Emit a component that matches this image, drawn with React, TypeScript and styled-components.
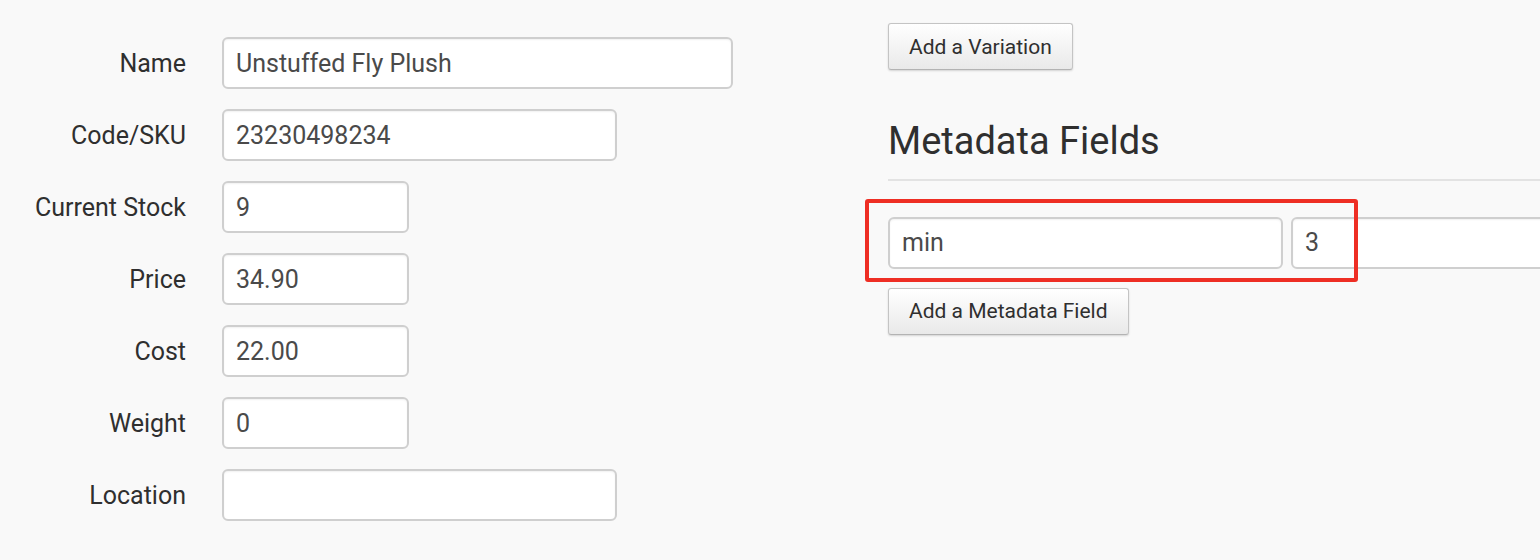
import React from "react";
import styled, { createGlobalStyle } from "styled-components";

const GlobalStyle = createGlobalStyle`
  html, body {
    margin: 0;
    padding: 0;
    overflow: hidden;
    background: #f9f9f9;
    font-family: Roboto, "Liberation Sans", sans-serif;
    color: #2f2f2f;
  }
`;

interface IField {
  label: string;
  value: string;
  width: number;
}

const fields: IField[] = [
  { label: "Name", value: "Unstuffed Fly Plush", width: 511 },
  { label: "Code/SKU", value: "23230498234", width: 395 },
  { label: "Current Stock", value: "9", width: 187 },
  { label: "Price", value: "34.90", width: 187 },
  { label: "Cost", value: "22.00", width: 187 },
  { label: "Weight", value: "0", width: 187 },
  { label: "Location", value: "", width: 395 },
];

const App = () => {
  return (
    <>
      <GlobalStyle />
      <Page>
        <Form>
          {fields.map(f => (
            <Row key={f.label}>
              <Label>{f.label}</Label>
              <TextInput $width={f.width} defaultValue={f.value} readOnly />
            </Row>
          ))}
        </Form>
        <Side>
          <Button>Add a Variation</Button>
          <Heading>Metadata Fields</Heading>
          <Rule />
          <MetaRow>
            <TextInput $width={395} defaultValue="min" readOnly />
            <TextInput $width={395} defaultValue="3" readOnly />
            <Highlight />
          </MetaRow>
          <Button>Add a Metadata Field</Button>
        </Side>
      </Page>
    </>
  );
};

export default App;

const Page = styled.div`
  display: flex;
  width: 1540px;
  height: 560px;
`;

const Form = styled.div`
  width: 865px;
  flex-shrink: 0;
  display: flex;
  flex-direction: column;
  gap: 20px;
  padding-top: 37px;
`;

const Row = styled.div`
  display: flex;
  align-items: center;
  gap: 36px;
`;

const Label = styled.label`
  width: 186px;
  text-align: right;
  font-size: 25px;
  color: #2f2f2f;
`;

const TextInput = styled.input<{ $width: number }>`
  box-sizing: border-box;
  width: ${props => props.$width}px;
  height: 52px;
  flex-shrink: 0;
  padding: 0 12px;
  border: 2px solid #cfcfcf;
  border-radius: 6px;
  background: #fff;
  box-shadow: inset 0 1px 2px rgba(0, 0, 0, 0.06);
  font-family: Roboto, "Liberation Sans", sans-serif;
  font-size: 25px;
  color: #4a4a4a;
  outline: none;
`;

const Side = styled.div`
  flex: 1;
  min-width: 0;
  overflow: hidden;
  display: flex;
  flex-direction: column;
  align-items: flex-start;
  padding: 23px 0 0 23px;
`;

const Button = styled.button`
  box-sizing: border-box;
  height: 47px;
  padding: 0 20px;
  border: 1px solid #c4c4c4;
  border-bottom-color: #b3b3b3;
  border-radius: 3px;
  background: linear-gradient(to bottom, #ffffff, #e9e9e9);
  box-shadow: 0 1px 2px rgba(0, 0, 0, 0.15);
  font-family: Roboto, "Liberation Sans", sans-serif;
  font-size: 21px;
  color: #2f2f2f;
`;

const Heading = styled.h3`
  margin: 51px 0 0;
  font-size: 38px;
  font-weight: 400;
  line-height: 1.1;
  color: #2f2f2f;
`;

const Rule = styled.hr`
  align-self: stretch;
  margin: 16px 0 0;
  border: 0;
  border-top: 2px solid #e3e3e3;
`;

const MetaRow = styled.div`
  position: relative;
  display: flex;
  gap: 8px;
  margin: 36px 0 19px;
`;

const Highlight = styled.div`
  position: absolute;
  left: -23px;
  top: -18px;
  width: 493px;
  height: 83px;
  box-sizing: border-box;
  border: 4px solid #ee2e24;
  border-radius: 3px;
  pointer-events: none;
`;
